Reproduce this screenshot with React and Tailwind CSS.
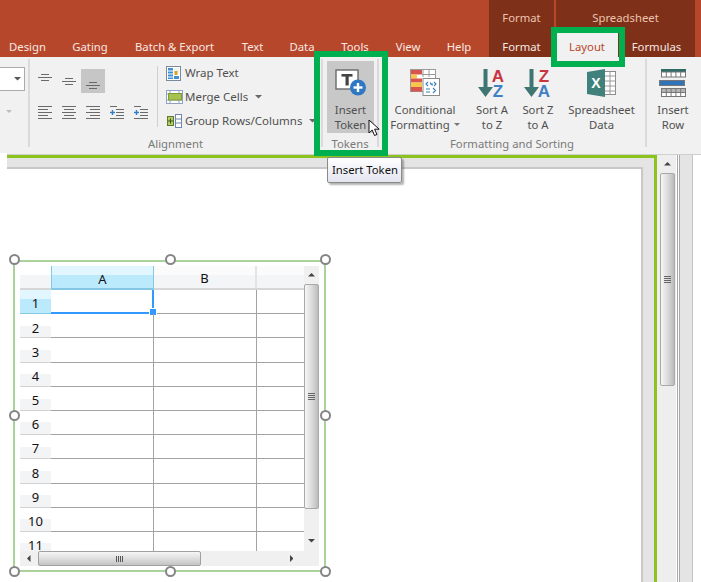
import React from 'react';

const FONT = "font-['Noto_Sans','Open_Sans',sans-serif]";

const TABS = [
  { label: 'Design', w: 'w-[55px]' },
  { label: 'Gating', w: 'w-[70px]' },
  { label: 'Batch & Export', w: 'w-[99px]' },
  { label: 'Text', w: 'w-[57px]' },
  { label: 'Data', w: 'w-[42px]' },
  { label: 'Tools', w: 'w-[64px]' },
  { label: 'View', w: 'w-[42px]' },
  { label: 'Help', w: 'w-[60px]' },
];

const ROWS = [1, 2, 3, 4, 5, 6, 7, 8, 9, 10, 11];

const HANDLES = [
  'left-[-6px] top-[-8px]',
  'left-[150px] top-[-8px]',
  'left-[305px] top-[-8px]',
  'left-[-6px] top-[148px]',
  'left-[305px] top-[148px]',
  'left-[-6px] top-[304px]',
  'left-[150px] top-[304px]',
  'left-[305px] top-[304px]',
];

function Tri({ dir = 'down', className = '', color = '#555' }) {
  const pts = {
    down: '0,0 8,0 4,4',
    up: '0,4 8,4 4,0',
    left: '4,0 4,8 0,4',
    right: '0,0 0,8 4,4',
  }[dir];
  const box = dir === 'left' || dir === 'right' ? '0 0 4 8' : '0 0 8 4';
  return (
    <svg viewBox={box} className={className}>
      <polygon points={pts} fill={color} />
    </svg>
  );
}

function Lines({ rows, extra }) {
  return (
    <svg width="24" height="24" viewBox="0 0 24 24">
      {rows.map(([x1, x2, y], i) => (
        <line key={i} x1={x1} x2={x2} y1={y} y2={y} stroke="#6a6a6a" strokeWidth="1" />
      ))}
      {extra}
    </svg>
  );
}

const indentMark = (
  <g>
    <line x1="5" x2="10" y1="12.5" y2="12.5" stroke="#2f7fc9" strokeWidth="1.4" />
    <line x1="7.5" x2="7.5" y1="10" y2="15" stroke="#2f7fc9" strokeWidth="1.4" />
  </g>
);

const ALIGN_TOP = [
  <Lines key="a" rows={[[8, 16, 5.5], [5, 19, 8.5], [8, 16, 11.5]]} />,
  <Lines key="b" rows={[[8, 16, 9.5], [5, 19, 12.5], [8, 16, 15.5]]} />,
  <Lines key="c" rows={[[8, 16, 13.5], [5, 19, 16.5], [8, 16, 19.5]]} />,
];

const ALIGN_BOTTOM = [
  <Lines key="a" rows={[[5, 19, 6.5], [5, 15, 9.5], [5, 19, 12.5], [5, 15, 15.5], [5, 19, 18.5]]} />,
  <Lines key="b" rows={[[5, 19, 6.5], [7, 17, 9.5], [5, 19, 12.5], [7, 17, 15.5], [5, 19, 18.5]]} />,
  <Lines key="c" rows={[[5, 19, 6.5], [9, 19, 9.5], [5, 19, 12.5], [9, 19, 15.5], [5, 19, 18.5]]} />,
  <Lines key="d" rows={[[5, 12, 6.5], [11, 19, 9.5], [11, 19, 12.5], [11, 19, 15.5], [5, 19, 18.5]]} extra={indentMark} />,
  <Lines key="e" rows={[[5, 12, 6.5], [11, 19, 9.5], [11, 19, 12.5], [11, 19, 15.5], [5, 19, 18.5]]} extra={indentMark} />,
];

function WrapIcon() {
  return (
    <svg width="15" height="15" viewBox="0 0 15 15">
      <rect x="0.5" y="0.5" width="14" height="14" fill="#fff" stroke="#7a8a9a" />
      <rect x="2" y="2" width="5" height="11" fill="#3f8fd6" />
      <rect x="8" y="2" width="5" height="5" fill="#f1f1f1" />
      <rect x="8.5" y="5" width="3" height="4" fill="#d9a520" />
      <rect x="8" y="10" width="5" height="3" fill="#3f8fd6" />
      <line x1="2" x2="7" y1="5" y2="5" stroke="#fff" />
      <line x1="2" x2="7" y1="8" y2="8" stroke="#fff" />
      <line x1="2" x2="7" y1="11" y2="11" stroke="#fff" />
    </svg>
  );
}

function MergeIcon() {
  return (
    <svg width="17" height="14" viewBox="0 0 17 14">
      <rect x="0.5" y="0.5" width="16" height="13" fill="#fff" stroke="#8ea3c4" />
      <line x1="0" x2="17" y1="4" y2="4" stroke="#8ea3c4" />
      <line x1="0" x2="17" y1="10" y2="10" stroke="#8ea3c4" />
      <line x1="4" x2="4" y1="0" y2="14" stroke="#8ea3c4" />
      <line x1="13" x2="13" y1="0" y2="14" stroke="#8ea3c4" />
      <rect x="2.5" y="3.5" width="13" height="6.5" fill="#a7c34f" stroke="#7e9a35" />
    </svg>
  );
}

function GroupIcon() {
  return (
    <svg width="16" height="14" viewBox="0 0 16 14">
      <rect x="9.5" y="0.5" width="6" height="13" fill="#fff" stroke="#6f86ad" />
      <line x1="9" x2="16" y1="5" y2="5" stroke="#6f86ad" />
      <line x1="9" x2="16" y1="9" y2="9" stroke="#6f86ad" />
      <rect x="1.5" y="2.5" width="6" height="9" fill="#b5cc68" stroke="#5f7a2a" />
      <line x1="2" x2="7" y1="7" y2="7" stroke="#3f5a18" />
      <line x1="4.5" x2="4.5" y1="4.5" y2="9.5" stroke="#3f5a18" />
    </svg>
  );
}

function TokenIcon() {
  return (
    <svg width="32" height="28" viewBox="0 0 32 28">
      <rect x="1" y="1" width="22" height="19" fill="#fff" stroke="#6a6a6a" strokeWidth="1.4" />
      <rect x="6.5" y="5" width="11" height="2.6" fill="#444" />
      <rect x="10.5" y="5" width="3.2" height="11.5" fill="#444" />
      <circle cx="23" cy="18.5" r="8" fill="#2f78c4" />
      <rect x="18.5" y="17.3" width="9" height="2.4" fill="#fff" />
      <rect x="21.8" y="14" width="2.4" height="9" fill="#fff" />
    </svg>
  );
}

function ConditionalIcon() {
  return (
    <svg width="30" height="27" viewBox="0 0 30 27">
      <rect x="0.5" y="0.5" width="25" height="22" fill="#fff" stroke="#9a9a9a" />
      <rect x="1" y="1" width="11" height="4.5" fill="#d9534f" />
      <rect x="1" y="5.5" width="6" height="4" fill="#f7c64a" />
      <rect x="1" y="9.5" width="11" height="4" fill="#d9534f" />
      <rect x="1" y="13.5" width="11" height="4.5" fill="#f7c64a" />
      <rect x="1" y="18" width="11" height="4.5" fill="#d9534f" />
      <line x1="13" x2="13" y1="0" y2="8" stroke="#9a9a9a" />
      <line x1="19" x2="19" y1="0" y2="8" stroke="#9a9a9a" />
      <line x1="12" x2="26" y1="5.5" y2="5.5" stroke="#9a9a9a" />
      <rect x="13" y="9.5" width="16.5" height="17" fill="#fff" stroke="#8a8a8a" />
      <path d="M18 13l-2 2 2 2M24 13l2 2-2 2M20 15h3M20 13.5l2.5 3M16 20h4M16 23h4M23 19l2.5 2.5-2.5 2.5" fill="none" stroke="#3a7fc0" strokeWidth="1.1" />
    </svg>
  );
}

function SortIcon({ top, bottom, topColor, bottomColor }) {
  return (
    <svg width="30" height="35" viewBox="0 -3 30 35" className="mt-[2px] font-['Liberation_Sans',sans-serif]">
      <rect x="6.5" y="0" width="4" height="20" fill="#3f7672" />
      <polygon points="1,18 16,18 8.5,28" fill="#3f7672" />
      <text x="21" y="13" textAnchor="middle" fontSize="17" fontWeight="700" fill={topColor}>{top}</text>
      <text x="21" y="28" textAnchor="middle" fontSize="17" fontWeight="700" fill={bottomColor}>{bottom}</text>
    </svg>
  );
}

function ExcelIcon() {
  return (
    <svg width="29" height="28" viewBox="0 0 29 28">
      <rect x="17.5" y="2.5" width="11" height="23" fill="#fff" stroke="#8a8a8a" />
      <line x1="23" x2="23" y1="2" y2="26" stroke="#9a9a9a" />
      <line x1="17" x2="29" y1="7" y2="7" stroke="#9a9a9a" />
      <line x1="17" x2="29" y1="12" y2="12" stroke="#9a9a9a" />
      <line x1="17" x2="29" y1="17" y2="17" stroke="#9a9a9a" />
      <line x1="17" x2="29" y1="22" y2="22" stroke="#9a9a9a" />
      <polygon points="0,3 18,0 18,28 0,25" fill="#41817c" />
      <text x="9" y="19" textAnchor="middle" fontSize="14" fontWeight="700" fill="#fff" className="font-['Liberation_Sans',sans-serif]">X</text>
    </svg>
  );
}

function InsertRowIcon() {
  const cells = [0, 1, 2, 3, 4];
  return (
    <svg width="28" height="28" viewBox="0 0 28 28">
      <rect x="2" y="0" width="25" height="3" fill="#2f6b66" />
      <rect x="2.5" y="3" width="24" height="5" fill="#fff" stroke="#777" />
      {cells.map(i => <line key={i} x1={2.5 + i * 4.8} x2={2.5 + i * 4.8} y1="3" y2="8" stroke="#777" />)}
      <rect x="0.5" y="11.5" width="25" height="5" fill="#2f73b8" stroke="#777" />
      <rect x="2.5" y="19.5" width="24" height="8" fill="#fff" stroke="#777" />
      <rect x="3" y="20" width="23" height="3.5" fill="#b5b5b5" />
      <line x1="2" x2="27" y1="23.5" y2="23.5" stroke="#777" />
      {cells.map(i => <line key={i} x1={2.5 + i * 4.8} x2={2.5 + i * 4.8} y1="19" y2="28" stroke="#777" />)}
    </svg>
  );
}

function BigButton({ icon, lines, className = '', active = false, caret = false }) {
  return (
    <div className={`flex flex-col items-center mt-[2px] h-[72px] pt-[8px] ${active ? 'bg-[#c8c8c8]' : ''} ${className}`}>
      <div className="h-[27px] flex items-center justify-center">{icon}</div>
      <div className="mt-[6px] text-center leading-[15px] whitespace-nowrap">
        <div>{lines[0]}</div>
        <div className="flex items-center justify-center gap-[4px]">
          {lines[1]}
          {caret && <Tri className="w-[6px] h-[3px]" color="#777" />}
        </div>
      </div>
    </div>
  );
}

function Group({ label, className = '', children }) {
  return (
    <div className={`h-[88px] mt-[2px] border-r-2 border-[#dadada] flex flex-col ${className}`}>
      <div className="h-[75px] flex">{children}</div>
      <div className="h-[13px] leading-[20px] text-center text-[#7a7a7a] whitespace-nowrap">{label}</div>
    </div>
  );
}

function ListItem({ icon, label, caret }) {
  return (
    <div className="h-[24px] flex items-center text-[11.5px]">
      <div className="w-[19px] flex items-center">{icon}</div>
      <span className="whitespace-nowrap">{label}</span>
      {caret && <Tri className={`w-[7px] h-[3.5px] ${caret}`} color="#666" />}
    </div>
  );
}

function Spreadsheet() {
  return (
    <div className="absolute left-[6px] top-[91px] w-[313px] h-[312px] border-2 border-[#a9d39a] pl-[5px] pt-[4px]">
      {HANDLES.map(pos => (
        <div key={pos} className={`absolute w-[11px] h-[11px] rounded-full bg-white border-2 border-[#858585] ${pos}`} />
      ))}
      <div className="w-[299px] h-[300px] flex flex-col bg-white text-[13px] text-[#111]">
        <div className="flex h-[285px]">
          <div className="w-[284px] overflow-hidden flex flex-col">
            <div className="flex h-[24px] shrink-0 border-b-2 border-[#d6d6d6]">
              <div className="w-[31px] bg-linear-to-b from-white from-40% to-[#f4f5f6] to-40%" />
              <div className="w-[103px] -mb-[2px] flex items-end justify-center pb-[1px] leading-[15px] bg-linear-to-b from-[#e1f6fe] from-40% to-[#bbeafd] to-40% border-x border-b-2 border-[#85c8e6]">A</div>
              <div className="w-[103px] flex items-end justify-center pb-[2px] leading-[15px] bg-linear-to-b from-[#fbfbfb] from-40% to-[#f4f5f6] to-40% border-r-2 border-[#e4e4e4]">B</div>
              <div className="flex-1 bg-linear-to-b from-[#fbfbfb] from-40% to-[#f4f5f6] to-40%" />
            </div>
            {ROWS.map(n => (
              <div key={n} className="flex h-[24.2px] shrink-0">
                <div className={`w-[31px] flex items-center justify-center pt-[5px] border-b ${n === 1 ? 'bg-linear-to-b from-[#e1f6fe] from-40% to-[#bbeafd] to-40% border-[#85c8e6]' : 'bg-linear-to-b from-white from-50% to-[#f3f4f6] to-50% border-[#d2d2d2]'}`}>{n}</div>
                <div className={`w-[103px] relative border-r ${n === 1 ? 'border-b-2 border-r-2 border-[#3399ff]' : 'border-b border-[#a3a3a3]'}`}>
                  {n === 1 && <div className="absolute right-[-5px] bottom-[-4px] w-[6px] h-[6px] bg-[#3399ff] border border-white box-content" />}
                </div>
                <div className="w-[103px] border-r border-b border-[#a3a3a3]" />
                <div className="flex-1 border-b border-[#a3a3a3]" />
              </div>
            ))}
          </div>
          <div className="w-[15px] bg-[#f0f0f0] flex flex-col items-center">
            <div className="h-[18px] flex items-center justify-center">
              <Tri dir="up" className="w-[7px] h-[3.5px]" color="#444" />
            </div>
            <div className="w-[15px] h-[225px] rounded-[2px] border border-[#a8a8a8] bg-linear-to-r from-[#f6f6f6] via-[#dcdcdc] to-[#bcbcbc] flex flex-col items-center justify-center gap-[1px]">
              <div className="w-[7px] h-px bg-[#666]" />
              <div className="w-[7px] h-px bg-[#666]" />
              <div className="w-[7px] h-px bg-[#666]" />
              <div className="w-[7px] h-px bg-[#666]" />
            </div>
            <div className="flex-1 flex items-center justify-center pt-[22px]">
              <Tri className="w-[7px] h-[3.5px]" color="#444" />
            </div>
          </div>
        </div>
        <div className="flex h-[15px] bg-[#f0f0f0] items-center">
          <div className="w-[18px] flex justify-center">
            <Tri dir="left" className="w-[3.5px] h-[7px]" color="#444" />
          </div>
          <div className="w-[163px] h-[15px] rounded-[2px] border border-[#a0a0a0] bg-linear-to-b from-[#f6f6f6] via-[#dedede] to-[#c4c4c4] flex items-center justify-center gap-[1px]">
            <div className="w-px h-[6px] bg-[#555]" />
            <div className="w-px h-[6px] bg-[#555]" />
            <div className="w-px h-[6px] bg-[#555]" />
            <div className="w-px h-[6px] bg-[#555]" />
          </div>
          <div className="w-[93px] flex justify-end pr-[1px]">
            <Tri dir="right" className="w-[3.5px] h-[7px]" color="#444" />
          </div>
        </div>
      </div>
    </div>
  );
}

export default function App() {
  return (
    <div className={`relative w-[701px] h-[582px] overflow-hidden bg-white flex flex-col text-[11.3px] text-[#505050] ${FONT}`}>
      <div className="h-[57px] bg-[#b7472a] flex items-end text-[#f8e8e2]">
        {TABS.map(t => (
          <div key={t.label} className={`${t.w} h-[24px] leading-[27px] text-center whitespace-nowrap`}>{t.label}</div>
        ))}
        <div className="h-[57px] flex gap-[2px]">
          <div className="w-[65px] bg-[#7e3019] flex flex-col justify-between text-center">
            <div className="pt-[9px] leading-[17px] text-[#edc3ae]">Format</div>
            <div className="h-[24px] leading-[27px]">Format</div>
          </div>
          <div className="w-[139px] bg-[#7e3019] flex flex-col justify-between text-center">
            <div className="pt-[9px] leading-[17px] text-[#edc3ae]">Spreadsheet</div>
            <div className="flex h-[24px] leading-[27px]">
              <div className="w-[62px] bg-[#f1f1f1] text-[#b7472a]">Layout</div>
              <div className="flex-1">Formulas</div>
            </div>
          </div>
        </div>
      </div>

      <div className="h-[98px] bg-[#f1f1f1] flex border-b border-[#cfcfcf]">
        <Group label="" className="w-[30px]">
          <div className="w-full flex flex-col">
            <div className="mt-[8px] w-[25px] h-[24px] bg-white border border-[#ababab] border-l-0 flex items-center justify-end pr-[3px]">
              <Tri className="w-[7px] h-[3.5px]" color="#555" />
            </div>
            <div className="mt-[19px] pl-[6px]">
              <Tri className="w-[6px] h-[3px]" color="#bdbdbd" />
            </div>
          </div>
        </Group>

        <Group label="Alignment" className="w-[293px]">
          <div className="w-[127px] pl-[3px] pt-[10px]">
            <div className="flex">
              <div className="w-[24px] h-[24px]">{ALIGN_TOP[0]}</div>
              <div className="w-[24px] h-[24px]">{ALIGN_TOP[1]}</div>
              <div className="w-[24px] h-[24px] bg-[#c6c6c6]">{ALIGN_TOP[2]}</div>
            </div>
            <div className="flex mt-[7px]">
              {ALIGN_BOTTOM.map((icon, i) => (
                <div key={i} className="w-[24px] h-[24px]">{icon}</div>
              ))}
            </div>
          </div>
          <div className="w-px h-[61px] mt-[7px] bg-[#d0d0d0]" />
          <div className="pl-[8px] pt-[2px] flex-1">
            <ListItem icon={<WrapIcon />} label="Wrap Text" />
            <ListItem icon={<MergeIcon />} label="Merge Cells" caret="ml-[7px]" />
            <ListItem icon={<GroupIcon />} label="Group Rows/Columns" caret="ml-[7px]" />
          </div>
        </Group>

        <Group label="Tokens" className="w-[56px]">
          <BigButton active icon={<TokenIcon />} lines={['Insert', 'Token']} className="w-[47px] ml-[4px]" />
        </Group>

        <Group label="Formatting and Sorting" className="w-[268px]">
          <div className="flex pl-[11px]">
            <BigButton icon={<ConditionalIcon />} lines={['Conditional', 'Formatting']} caret className="w-[70px] mr-[9px]" />
            <BigButton icon={<SortIcon top="A" bottom="Z" topColor="#c9353f" bottomColor="#3f80c4" />} lines={['Sort A', 'to Z']} className="w-[46px]" />
            <BigButton icon={<SortIcon top="Z" bottom="A" topColor="#c9353f" bottomColor="#3f80c4" />} lines={['Sort Z', 'to A']} className="w-[46px]" />
            <BigButton icon={<ExcelIcon />} lines={['Spreadsheet', 'Data']} className="w-[81px]" />
          </div>
        </Group>

        <div className="pt-[2px]">
          <BigButton icon={<InsertRowIcon />} lines={['Insert', 'Row']} className="w-[52px]" />
        </div>
      </div>

      <div className="flex-1 flex min-h-0">
        <div className="w-[7px] bg-white -mt-[2px] relative" />
        <div className="w-[650px] bg-[#e4e4e4] border-t-[3px] border-r-[3px] border-[#8dc31f] pt-[9px] pr-[11px] flex flex-col">
          <div className="flex-1 relative bg-white border-t-2 border-r-2 border-[#c8c8c8]">
            <Spreadsheet />
          </div>
        </div>
        <div className="w-[19px] bg-[#eeeeee] flex flex-col items-center pl-[1px]">
          <div className="h-[18px] flex items-center justify-center">
            <Tri dir="up" className="w-[7px] h-[3.5px]" color="#444" />
          </div>
          <div className="w-[15px] h-[213px] rounded-[2px] border border-[#a8a8a8] bg-linear-to-r from-[#f6f6f6] via-[#dcdcdc] to-[#bcbcbc] flex flex-col items-center justify-center gap-[1px]">
            <div className="w-[7px] h-px bg-[#666]" />
            <div className="w-[7px] h-px bg-[#666]" />
            <div className="w-[7px] h-px bg-[#666]" />
            <div className="w-[7px] h-px bg-[#666]" />
          </div>
        </div>
        <div className="w-px bg-white" />
        <div className="w-px bg-[#a8a8a8]" />
        <div className="w-px bg-white" />
        <div className="w-px bg-[#a8a8a8]" />
        <div className="w-[13px] bg-[#e4e4e4] border-r border-[#c4c4c4]" />
        <div className="flex-1 bg-white" />
      </div>

      {/* callout boxes drawn over the ribbon */}
      <div className="absolute left-[551px] top-[27px] w-[74px] h-[40px] border-[6px] border-[#00b050]" />
      <div className="absolute left-[314px] top-[51px] w-[74px] h-[105px] border-[6px] border-[#00b050]" />

      <div className="absolute left-[327px] top-[157px] w-[75px] h-[26px] rounded-[2px] border border-[#8a8a8a] bg-linear-to-b from-white to-[#e3e4ef] shadow-[2px_2px_2px_rgba(0,0,0,0.3)] pl-[4px] leading-[24px] text-[#111] whitespace-nowrap">Insert Token</div>

      <svg className="absolute left-[368px] top-[119px]" width="14" height="18" viewBox="0 0 14 18">
        <path d="M1 1v13l3.2-3 2.3 5.5 2.5-1-2.4-5.3h4.6z" fill="#fff" stroke="#111" strokeWidth="1" />
      </svg>
    </div>
  );
}
